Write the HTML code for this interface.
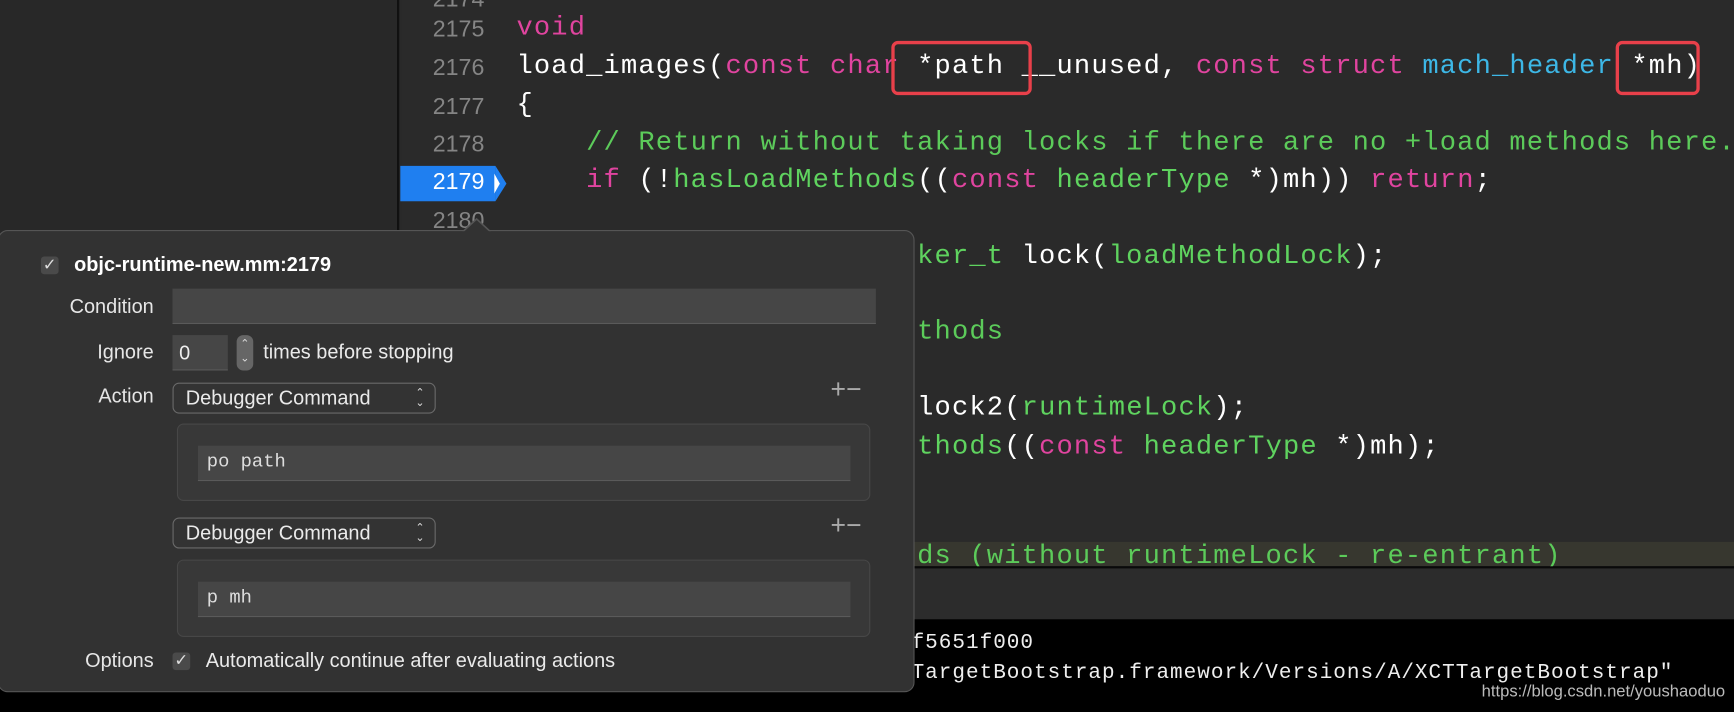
<!DOCTYPE html>
<html><head><meta charset="utf-8"><style>
*{margin:0;padding:0;box-sizing:border-box}
html,body{width:1734px;height:712px;overflow:hidden;background:#000}
#w{width:1568px;height:644px;position:relative;transform:scale(1.10587);transform-origin:0 0;background:#292929;font-family:"Liberation Sans",sans-serif;overflow:hidden}
.side{position:absolute;left:0;top:0;width:361px;height:560px;background:#282828;border-right:2px solid #111}
.ed{position:absolute;left:363px;top:0;right:0;height:512px;background:#2a2a2a}
.ln{position:absolute;left:363px;width:75px;text-align:right;color:#858585;font-size:21px;font-family:"Liberation Sans Narrow","Liberation Sans",sans-serif}
.code{position:absolute;font-family:"Liberation Mono",monospace;font-size:24.5px;letter-spacing:1.05px;color:#fff;white-space:pre}
.k{color:#e0449f}.g{color:#5fd35f}.c{color:#5ccb5a}.b{color:#3db7e6}
.box{position:absolute;border:3px solid #e8404a;border-radius:6px}
.hl{position:absolute;left:363px;right:0;top:490px;height:22px;background:#37372f}
.bar{position:absolute;left:363px;right:0;top:512px;height:48px;background:#2c2c2c;border-top:2px solid #0a0a0a}
.con{position:absolute;left:0;right:0;top:560px;bottom:0;background:#000}
.cl{position:absolute;font-family:"Liberation Mono",monospace;font-size:19px;color:#eee;white-space:pre;letter-spacing:0.9px}
.pop{position:absolute;left:-2px;top:208px;width:829px;height:418px;background:#323232;border:1px solid #555;border-radius:9px}
.lbl{position:absolute;color:#e6e6e6;font-size:18px;text-align:right;width:140px;left:0}
.fld{position:absolute;background:#464646;border-bottom:1px solid #5a5a5a}
.pu{position:absolute;left:155px;width:238px;height:28px;border:1.5px solid #6a6a6a;border-radius:6px;color:#eaeaea;font-size:18px;padding:3px 0 0 11px;background:#333}
.chev{position:absolute;right:9px;top:4px;font-size:10px;line-height:9px;text-align:center;color:#ddd}
.grp{position:absolute;left:159px;width:627px;height:70px;background:#383838;border:1px solid #474747;border-radius:6px}
.mono{font-family:"Liberation Mono",monospace;font-size:17px;color:#ddd;position:absolute;left:8px;top:6px}
.pm{position:absolute;left:752px;color:#aaa;font-size:24px;font-weight:300}
.cb{position:absolute;width:16px;height:16px;border-radius:3px;background:#4a4a4a;color:#ddd;font-size:15px;line-height:16px;text-align:center}
</style></head><body><div id="w">
<div class="side"></div>
<div class="ed"></div>
<div class="hl"></div>
<div class="bar"></div>
<div class="con"></div>
<div class="cl" style="left:812px;top:570px">ff5651f000</div>
<div class="cl" style="left:812px;top:597px">"TargetBootstrap.framework/Versions/A/XCTTargetBootstrap"</div>
<div style="position:absolute;right:8px;top:617px;color:#bbb;font-size:15px;font-family:'Liberation Sans Narrow','Liberation Sans',sans-serif">https://blog.csdn.net/youshaoduo</div>

<div class="ln" style="top:-12px">2174</div>
<div class="ln" style="top:15px">2175</div>
<div class="ln" style="top:50px">2176</div>
<div class="ln" style="top:85px">2177</div>
<div class="ln" style="top:119px">2178</div>
<div style="position:absolute;left:362px;top:150px;width:86px;height:32px;background:#1f7ff0"></div>
<div style="position:absolute;left:448px;top:150px;width:0;height:0;border-top:16px solid transparent;border-bottom:16px solid transparent;border-left:10px solid #1f7ff0"></div>
<div class="ln" style="top:153px;color:#fff">2179</div>
<div style="position:absolute;left:447px;top:157px;width:0;height:0;border-top:9px solid transparent;border-bottom:9px solid transparent;border-left:5px solid #fff"></div>
<div class="ln" style="top:188px">2180</div>

<div class="code" style="left:467px;top:12px"><span class="k">void</span></div>
<div class="code" style="left:467px;top:47px">load_images(<span class="k">const char</span> *path __unused, <span class="k">const struct</span> <span class="b">mach_header</span> *mh)</div>
<div class="code" style="left:467px;top:82px">{</div>
<div class="code" style="left:467px;top:116px"><span class="c">    // Return without taking locks if there are no +load methods here.</span></div>
<div class="code" style="left:467px;top:150px">    <span class="k">if</span> (!<span class="g">hasLoadMethods</span>((<span class="k">const</span> <span class="g">headerType</span> *)mh)) <span class="k">return</span>;</div>
<div class="code" style="left:467px;top:219px">    <span class="g">recursive_mutex_locker_t</span> lock(<span class="g">loadMethodLock</span>);</div>
<div class="code" style="left:467px;top:287px"><span class="c">    // Discover load methods</span></div>
<div class="code" style="left:467px;top:356px">        <span class="g">mutex_locker_t</span> lock2(<span class="g">runtimeLock</span>);</div>
<div class="code" style="left:467px;top:391px">        <span class="g">prepare_load_methods</span>((<span class="k">const</span> <span class="g">headerType</span> *)mh);</div>
<div style="position:absolute;left:363px;right:0;top:490px;height:22px;overflow:hidden"><div class="code" style="left:104px;top:0px"><span class="c">    // Call +load methods (without runtimeLock - re-entrant)</span></div></div>
<div class="box" style="left:806px;top:37px;width:127px;height:49px"></div>
<div class="box" style="left:1461px;top:37px;width:76px;height:49px"></div>

<div class="pop">
 <div class="cb" style="left:38px;top:23px">✓</div>
 <div style="position:absolute;left:68px;top:20px;color:#fff;font-weight:bold;font-size:18px">objc-runtime-new.mm:2179</div>
 <div class="lbl" style="top:58px">Condition</div>
 <div class="fld" style="left:157px;top:52px;width:636px;height:32px"></div>
 <div class="lbl" style="top:99px">Ignore</div>
 <div class="fld" style="left:157px;top:94px;width:50px;height:32px;color:#eee;font-size:18px;padding:6px 0 0 6px">0</div>
 <div style="position:absolute;left:215px;top:94px;width:15px;height:32px;background:#666;border-radius:6px;color:#ddd;font-size:10px;line-height:13px;text-align:center;padding-top:2px">⌃<br>⌄</div>
 <div style="position:absolute;left:239px;top:99px;color:#eaeaea;font-size:18px">times before stopping</div>
 <div class="lbl" style="top:139px">Action</div>
 <div class="pu" style="left:157px;top:137px">Debugger Command<div class="chev">⌃<br>⌄</div></div>
 <div class="pm" style="top:130px">+−</div>
 <div class="grp" style="left:161px;top:174px"><div class="fld" style="left:18px;top:19px;width:590px;height:32px"><span class="mono">po path</span></div></div>
 <div class="pu" style="left:157px;top:259px">Debugger Command<div class="chev">⌃<br>⌄</div></div>
 <div class="pm" style="top:253px">+−</div>
 <div class="grp" style="left:161px;top:297px"><div class="fld" style="left:18px;top:19px;width:590px;height:32px"><span class="mono">p mh</span></div></div>
 <div class="lbl" style="top:378px">Options</div>
 <div class="cb" style="left:157px;top:381px">✓</div>
 <div style="position:absolute;left:187px;top:378px;color:#eaeaea;font-size:18px">Automatically continue after evaluating actions</div>
</div>
<div style="position:absolute;left:418px;top:197px;width:0;height:0;border-left:13px solid transparent;border-right:13px solid transparent;border-bottom:12px solid #555"></div>
<div style="position:absolute;left:419px;top:199px;width:0;height:0;border-left:12px solid transparent;border-right:12px solid transparent;border-bottom:11px solid #323232"></div>
</div></body></html>
